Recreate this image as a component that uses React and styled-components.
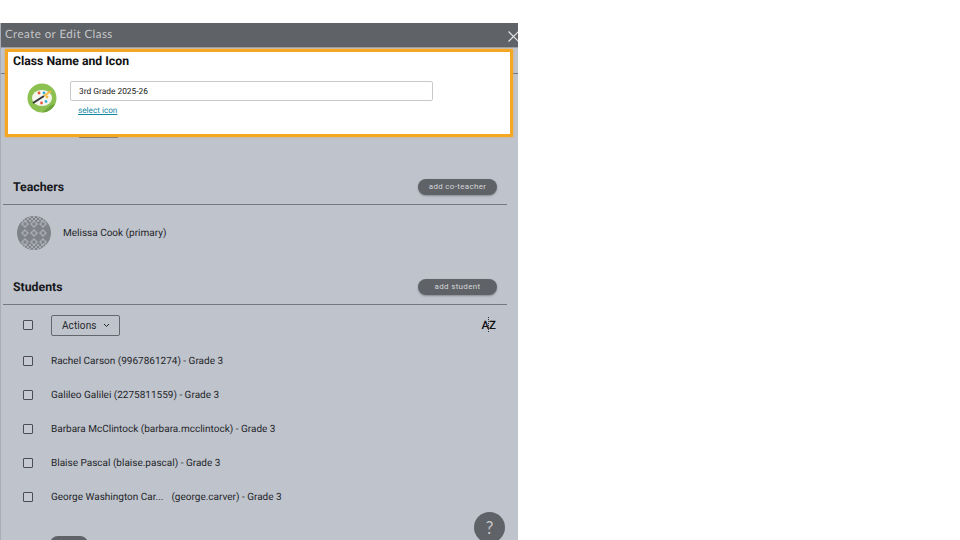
import React from "react";
import styled, { createGlobalStyle } from "styled-components";

const Global = createGlobalStyle`
  html, body { margin: 0; padding: 0; height: 540px; overflow: hidden; background: #fff; }
  body { font-family: Roboto, "Liberation Sans", sans-serif; text-rendering: geometricPrecision; }
`;
const Panel = styled.div`
  position: relative; width: 517px; height: 517px; margin-top: 23px; margin-left: 1px;
  background: #bfc3cc; overflow: hidden; box-shadow: -1px 0 0 #a9adb6;
  display: flex; flex-direction: column;
  & > * { flex: none; }
`;
const Header = styled.div`
  height: 24px; background: #5f6266; border-bottom: 1px solid #9a9da3;
  display: flex; align-items: center; justify-content: space-between;
  padding: 0 0 0 4px;
`;
const Title = styled.span`
  font-family: Lato, "Open Sans", sans-serif; font-size: 11.5px; line-height: 22px; letter-spacing: .46px; color: #c6c8cc;
`;
const Close = styled.svg`width: 11px; height: 11px; margin: 2px -1px 0 0; stroke: #e4e5e8; stroke-width: 1.2; fill: none;`;
const Behind = styled.div`
  height: 124px; box-sizing: border-box; padding-top: 25px;
`;
const Rule = styled.div`height: 1px; background: #75787f; margin: ${p => p.$m || "0"};`;
const Remnant = styled.div`width: 39px; height: 1px; margin: 63px 0 0 78px; background: #75787f;`;
const Highlight = styled.section`
  position: absolute; left: 4px; top: 26px; width: 508px; height: 88px; box-sizing: border-box;
  background: #fff; border: 3px solid #f5a623; box-shadow: 0 0 2px #f5a62399; padding: 1px 5px 0;
`;
const HTitle = styled.h2`
  margin: 0; font: 700 12.25px/16px Roboto, sans-serif; color: #111;
`;
const NameRow = styled.div`display: flex; gap: 13px; margin: 12px 0 0 14px; align-items: flex-start;`;
const PaletteIcon = styled.svg`width: 30px; height: 30px; margin-top: 2px; flex: none;`;
const NameCol = styled.div`display: flex; flex-direction: column;`;
const Input = styled.div`
  width: 363px; height: 20px; box-sizing: border-box; border: 1px solid #c9c9c9; border-radius: 2px;
  padding: 1px 0 0 8px; font: 8.4px/18px Roboto, sans-serif; color: #222;
`;
const Link = styled.a`
  margin: 5px 0 0 8px; font: 8.2px/11px Roboto, sans-serif; color: #1487a5; text-decoration: underline;
`;
const SectionHead = styled.div`
  display: flex; align-items: center; justify-content: space-between; padding: 0 21px 0 12px; height: 30px; margin-bottom: 2px;
`;
const SectionTitle = styled.h3`margin: 2px 0 0; font: 700 12.3px/16px Roboto, sans-serif; color: #17191c;`;
const Pill = styled.button`
  width: 79px; height: 16px; border: 0; border-radius: 8px; padding: 0; background: #5f6266;
  box-shadow: 0 1px 2px #0000004d; font: 8px/16px Roboto, sans-serif; letter-spacing: .32px; color: #d4d6da;
`;
const TeacherRow = styled.div`display: flex; align-items: center; gap: 12px; padding: 11px 0 0 16px; height: 34px; margin-bottom: 22px;`;
const Avatar = styled.svg`width: 34px; height: 34px; flex: none;`;
const Name = styled.span`font: 10px/14px Roboto, sans-serif; color: #24262a; margin-top: 2px;`;
const Row = styled.div`display: flex; align-items: center; height: ${p => p.$h || 34}px; padding-left: 22px; gap: 18px;`;
const Check = styled.span`
  width: 10px; height: 10px; box-sizing: border-box; flex: none; border: 1px solid #4a4d53; border-radius: 1px; background: #c6c9d1;
`;
const Actions = styled.button`
  width: 69px; height: 21px; box-sizing: border-box; border: 1px solid #63666c; border-radius: 2px;
  background: transparent; padding: 1px 0 0 10px; display: flex; align-items: center; gap: 6px;
  font: 10px/14px Roboto, sans-serif; letter-spacing: .1px; color: #24262a;
`;
const Sort = styled.span`
  position: relative; margin-left: auto; margin-right: 22px; font: 500 11.5px/12px Roboto, sans-serif; letter-spacing: 0; color: #111;
  &::after { content: ""; position: absolute; left: 7px; top: -2px; height: 15px; border-left: 1px dotted #333; }
`;
const Gap = styled.span`display: inline-block; width: 8px;`;
const StubButton = styled.div`width: 38px; height: 20px; margin: 22px 0 0 49px; border-radius: 8px 8px 0 0; background: #5f6266;`;
const Help = styled.button`
  position: absolute; left: 473px; top: 489px; width: 31px; height: 31px; border-radius: 50%; border: 0; padding: 0;
  background: #5f6266; color: #c6c8cc; font: 17px/31px Lato, sans-serif;
`;

const Palette = () => (
  <PaletteIcon viewBox="0 0 30 30">
    <circle cx="15" cy="15" r="14.5" fill="#8cc152" />
    <path d="M24 22 L15 29.5 A14.5 14.5 0 0 0 28 21 Z" fill="#6ea63e" />
    <ellipse cx="15" cy="15" rx="10" ry="8" fill="#f4f5ef" />
    <circle cx="12" cy="10" r="1.4" fill="#e9573f" />
    <circle cx="17" cy="10" r="1.4" fill="#3bafda" />
    <circle cx="20" cy="14" r="1.4" fill="#f6bb42" />
    <circle cx="19" cy="18.5" r="1.4" fill="#3bafda" />
    <circle cx="14.5" cy="20" r="1.4" fill="#e9573f" />
    <path d="M6 20 L17 13" stroke="#33363b" strokeWidth="2" />
    <path d="M17 13 L24 8" stroke="#f6bb42" strokeWidth="2" />
  </PaletteIcon>
);
const Quilt = () => {
  const band = [];
  for (let y = 0; y < 6; y += 2) for (let x = 0; x < 34; x += 2) {
    if ((x + y) % 4 === 0) {
      band.push(<rect key={`t${x}-${y}`} x={x} y={y} width="2" height="2" fill="#a9acb4" />);
      band.push(<rect key={`b${x}-${y}`} x={x} y={32 - y} width="2" height="2" fill="#a9acb4" />);
    }
  }
  const tiles = [];
  for (let r = 0; r < 3; r++) for (let c = 0; c < 3; c++) {
    const cx = 8 + c * 9, cy = 8 + r * 9;
    tiles.push(<path key={`${r}-${c}`} d={`M${cx} ${cy - 4}L${cx + 4} ${cy}L${cx} ${cy + 4}L${cx - 4} ${cy}Z`} fill="#a9acb4" />);
    tiles.push(<rect key={`c${r}-${c}`} x={cx - 1.5} y={cy - 1.5} width="3" height="3" fill="#7f8289" />);
  }
  return (
    <Avatar viewBox="0 0 34 34">
      <defs><clipPath id="q"><circle cx="17" cy="17" r="17" /></clipPath></defs>
      <g clipPath="url(#q)">
        <rect width="34" height="34" fill="#7f8289" />
        {band}
        {tiles}
      </g>
    </Avatar>
  );
};
const Chevron = () => (
  <svg width="7" height="5" viewBox="0 0 7 5" fill="none" stroke="#24262a" strokeWidth="1"><path d="M1 1l2.5 2.5L6 1" /></svg>
);

const students = [
  ["Rachel Carson (9967861274) - Grade 3"],
  ["Galileo Galilei (2275811559) - Grade 3"],
  ["Barbara McClintock (barbara.mcclintock) - Grade 3"],
  ["Blaise Pascal (blaise.pascal) - Grade 3"],
  ["George Washington Car...", "(george.carver) - Grade 3"],
];

export default function App() {
  return (
    <>
      <Global />
      <Panel>
        <Header>
          <Title>Create or Edit Class</Title>
          <Close viewBox="0 0 11 11"><path d="M.5.5l10 10M10.5.5l-10 10" /></Close>
        </Header>
        <Behind><Rule /><Remnant /></Behind>
        <Highlight>
          <HTitle>Class Name and Icon</HTitle>
          <NameRow>
            <Palette />
            <NameCol>
              <Input>3rd Grade 2025-26</Input>
              <Link>select icon</Link>
            </NameCol>
          </NameRow>
        </Highlight>
        <SectionHead>
          <SectionTitle>Teachers</SectionTitle>
          <Pill>add co-teacher</Pill>
        </SectionHead>
        <Rule $m="0 11px 0 2px" />
        <TeacherRow>
          <Quilt />
          <Name>Melissa Cook (primary)</Name>
        </TeacherRow>
        <SectionHead>
          <SectionTitle>Students</SectionTitle>
          <Pill>add student</Pill>
        </SectionHead>
        <Rule $m="0 11px 1px 2px" />
        <Row $h={38}>
          <Check />
          <Actions>Actions <Chevron /></Actions>
          <Sort>AZ</Sort>
        </Row>
        {students.map(([a, b]) => (
          <Row key={a}>
            <Check />
            <Name>{a}{b && <><Gap />{b}</>}</Name>
          </Row>
        ))}
        <StubButton />
        <Help>?</Help>
      </Panel>
    </>
  );
}
